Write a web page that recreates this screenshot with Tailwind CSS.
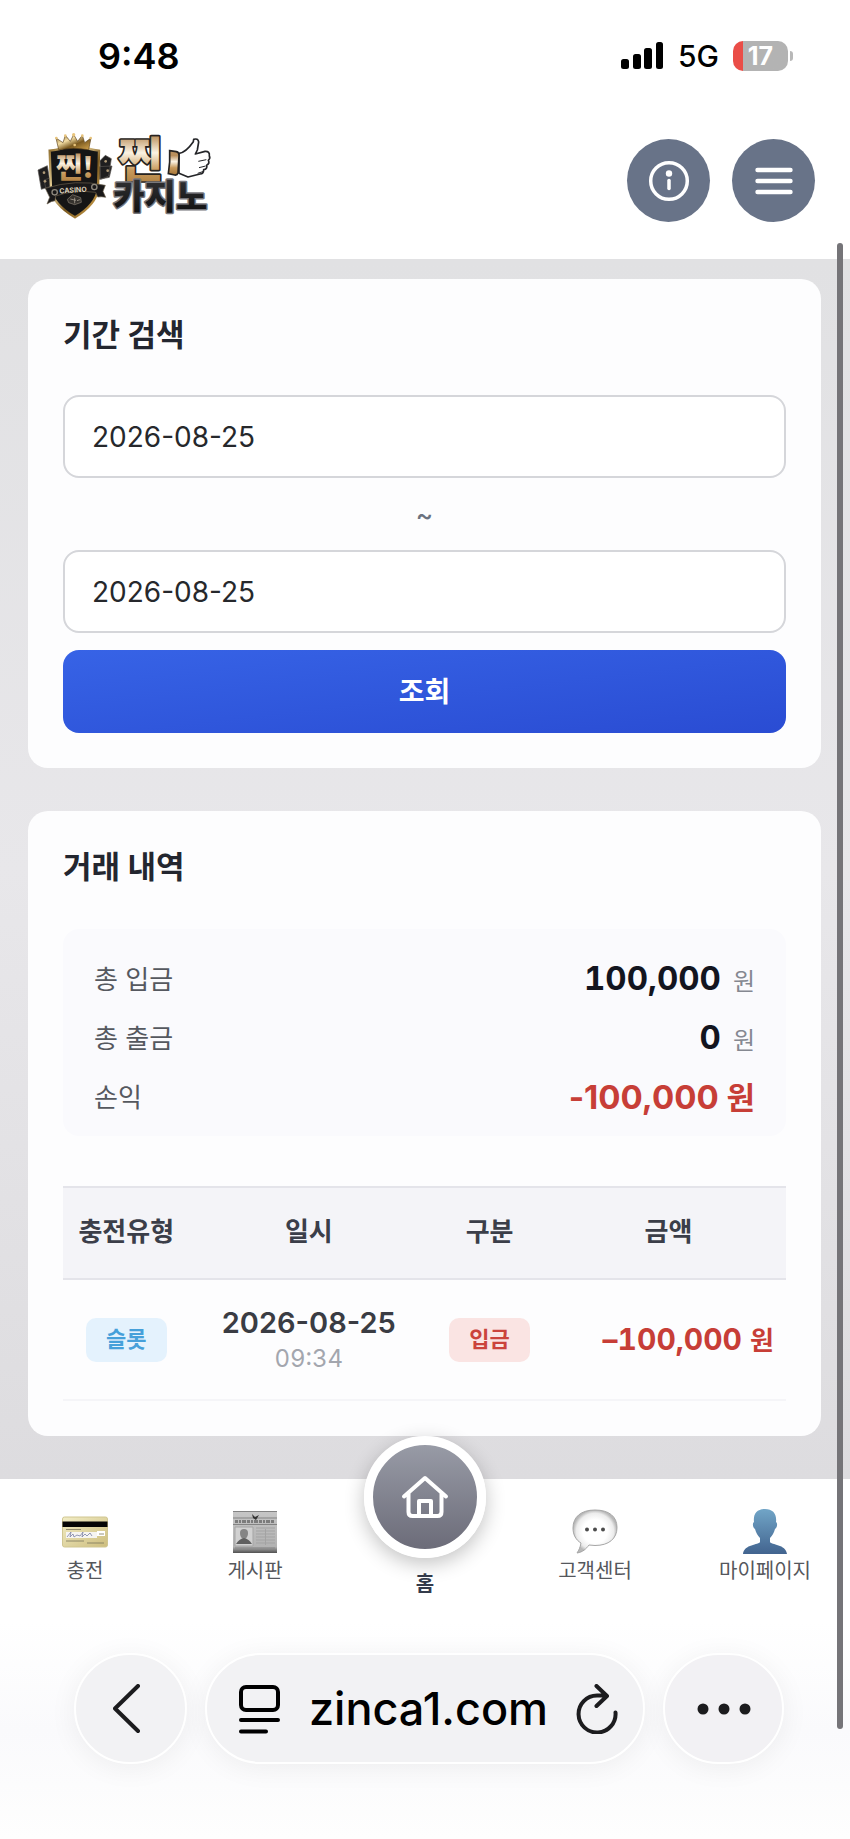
<!DOCTYPE html>
<html lang="ko">
<head>
<meta charset="utf-8">
<meta name="viewport" content="width=device-width, initial-scale=1">
<title>거래 내역</title>
<script src="https://cdn.jsdelivr.net/npm/@tailwindcss/browser@4"></script>
</head>
<body class="relative flex min-h-screen flex-col bg-white font-['Inter','Noto_Sans_CJK_KR',sans-serif] text-[#23262f]">

<!-- Status bar -->
<div class="flex h-28 items-center justify-between pr-[57px] pl-[98px] text-black">
  <span class="text-[36px] leading-none font-semibold">9:48</span>
  <div class="flex items-center gap-[14px]">
    <svg class="h-7 w-[43px]" viewBox="0 0 43 28" aria-hidden="true">
      <rect x="0" y="17" width="8" height="10" rx="2.500"/><rect x="12" y="12" width="8" height="15" rx="2.500"/><rect x="23" y="6" width="8" height="21" rx="2.500"/><rect x="35" y="0" width="7" height="27" rx="2.500"/>
    </svg>
    <span class="text-[30px] leading-none font-medium">5G</span>
    <div class="flex items-center gap-[2px]">
      <span class="flex h-[30px] w-[55px] items-center justify-center rounded-[10px] bg-linear-to-r from-[#ea4d47] from-[18%] to-[#b3b3b3] to-[18%] text-[25px] leading-none font-bold text-white">17</span>
      <span class="h-[10px] w-[3px] rounded-r-full bg-[#b8b8b8]"></span>
    </div>
  </div>
</div>

<!-- Site header -->
<header class="flex h-[147px] items-start justify-between pr-[35px] pl-5">
  <a href="#" aria-label="찐 카지노" class="mt-2 block">
    <svg class="h-[110px] w-[210px]" viewBox="0 0 630 330" aria-hidden="true">
      <defs>
        <linearGradient id="gold" x1="0" y1="0" x2="1" y2="1"><stop offset="0" stop-color="#8b6a2c"/><stop offset=".35" stop-color="#f3dda4"/><stop offset=".6" stop-color="#7b5a20"/><stop offset="1" stop-color="#d9a951"/></linearGradient>
        <linearGradient id="cream" x1="0" y1="0" x2="0" y2="1"><stop offset=".2" stop-color="#b98f5c"/><stop offset=".45" stop-color="#fbf3e3"/><stop offset=".7" stop-color="#c79a5c"/><stop offset="1" stop-color="#a37233"/></linearGradient>
        <linearGradient id="coal" x1="0" y1="0" x2="0" y2="1"><stop offset="0" stop-color="#39393b"/><stop offset="1" stop-color="#0b0b0c"/></linearGradient>
      </defs>
      <g fill="#1f1e1f" stroke="#57534e" stroke-width="2">
        <path d="M54 150l28-13 10 62-28 9zM72 180l24-8v32l-18 3zM240 122l16-16 18 10-8 52-24 10zM236 140l40-2-8 34-30 6z"/>
      </g>
      <g fill="#b09a77"><circle cx="72" cy="158" r="4"/><circle cx="75" cy="184" r="4"/><circle cx="257" cy="124" r="4"/><circle cx="263" cy="152" r="4"/></g>
      <path d="M89 92q38-4 51-14h50q14 10 47 14l-3 116q-6 45-69 84-66-40-72-84z" fill="#151515" stroke="url(#gold)" stroke-width="7"/>
      <path d="M116 89l-8-35 21 14 7-22 15 18 10-20 12 20 14-18 7 22 19-14-7 35q-45-9-90 0z" fill="url(#gold)" stroke="#5d431b" stroke-width="2"/>
      <g fill="#e8c47c"><circle cx="109" cy="54" r="4"/><circle cx="136" cy="47" r="4"/><circle cx="161" cy="44" r="5"/><circle cx="187" cy="47" r="4"/><circle cx="212" cy="54" r="4"/><circle cx="164" cy="75" r="4"/></g>
      <text x="108" y="174" font-family="Noto Sans CJK KR" font-weight="900" font-size="86" fill="url(#cream)">찐!</text>
      <path d="M76 205q90-29 180-9l-7 18 8 18q-12-3-24-1l-6-14q-63-9-120 11l-2 14q-11 1-24 10l8-20z" fill="#191819" stroke="#6d614d" stroke-width="2"/>
      <text x="118" y="217" font-family="Inter" font-weight="700" font-size="21" fill="#ded3bd" transform="rotate(-4 165 212)">CASINO</text>
      <g fill="none" stroke="#8e887d" stroke-width="4"><circle cx="104" cy="217" r="8"/><circle cx="223" cy="201" r="8"/></g>
      <path d="M142 238l16-14 24 9 2 14-20 7-18-6z" fill="#35322d" stroke="#8c8376" stroke-width="2"/><path d="M151 237l17 4m-4-8v17m7-8l9-3" stroke="#bbb2a5" stroke-width="2"/>
      <g font-family="Noto Sans CJK KR" font-weight="900" stroke-linejoin="round" paint-order="stroke">
        <text x="295" y="172" font-size="144" fill="url(#cream)" stroke="#252220" stroke-width="10">찐</text>
        <text x="280" y="267" font-size="102" fill="url(#coal)" stroke="#77777c" stroke-width="9">카지노</text>
      </g>
      <path d="M477 100q21-3 43-35l1-7q13-4 15 8l-4 24-6 12 29-8q15-1 13 14 4 7-3 13 5 9-5 15 3 11-9 13 0 12-11 13l-36 9-27-11z" fill="#fff" stroke="#242528" stroke-width="5" stroke-linejoin="round"/>
      <path d="M535 124l24-5m-22 24l20-5m-24 22l18-6" stroke="#242528" stroke-width="3" fill="none"/>
      <path d="M449 92l20 3q9 2 8 12l-3 52q-2 7-10 6l-19-4q6-35 4-69z" fill="url(#cream)" stroke="#242220" stroke-width="5"/>
    </svg>
  </a>
  <div class="mt-[27px] flex gap-[22px]">
    <button type="button" aria-label="정보" class="grid size-[83px] place-items-center rounded-full bg-[#687388]">
      <svg class="size-[42px]" viewBox="0 0 42 42" fill="none" stroke="#fff" stroke-width="3.500" stroke-linecap="round" aria-hidden="true"><circle cx="21" cy="21" r="18.300"/><path d="M21 20.500v8"/><circle cx="21" cy="13.500" r="3.200" fill="#fff" stroke="none"/></svg>
    </button>
    <button type="button" aria-label="메뉴" class="grid size-[83px] place-items-center rounded-full bg-[#687388]">
      <svg class="h-[28px] w-[38px]" viewBox="0 0 38 28" stroke="#fff" stroke-width="4.400" stroke-linecap="round" aria-hidden="true"><path d="M2.500 3h33M2.500 14h33M2.500 25h33"/></svg>
    </button>
  </div>
</header>

<!-- Content -->
<main class="flex flex-col gap-[43px] bg-linear-to-b from-[#e1e1e3] via-[#e8e7ea] to-[#dddcdf] pt-5 pr-[29px] pb-[43px] pl-7">
  <section class="rounded-[20px] bg-[#fdfdfe] px-[35px] pt-[34px] pb-[35px]">
    <h2 class="text-[31px] leading-[44px] font-bold">기간 검색</h2>
    <form class="mt-[38px] flex flex-col">
      <input type="text" aria-label="시작일" value="2026-08-25" class="h-[83px] w-full rounded-2xl border-2 border-[#d5d6da] bg-white px-[27px] text-[28px] text-[#26282c]">
      <span class="flex h-[72px] items-center justify-center text-[26px] font-medium text-[#6b7280]">~</span>
      <input type="text" aria-label="종료일" value="2026-08-25" class="h-[83px] w-full rounded-2xl border-2 border-[#d5d6da] bg-white px-[27px] text-[28px] text-[#26282c]">
      <button type="button" class="mt-[17px] h-[83px] rounded-2xl bg-linear-to-br from-[#3763e6] to-[#2a4cd3] text-[28px] font-bold text-white">조회</button>
    </form>
  </section>

  <section class="rounded-[20px] bg-[#fdfdfe] px-[35px] pt-[34px] pb-[35px]">
    <h2 class="text-[31px] leading-[44px] font-bold">거래 내역</h2>
    <dl class="mt-10 rounded-2xl bg-[#fafafd] px-[31px] pt-[21px] pb-[9px]">
      <div class="flex h-[59px] items-center justify-between">
        <dt class="text-[26px] text-[#55585f]">총 입금</dt>
        <dd class="flex items-baseline gap-3 text-[33px] leading-10 font-bold text-[#13151f] tabular-nums">100,000<span class="text-[24px] font-normal text-[#858891]">원</span></dd>
      </div>
      <div class="flex h-[59px] items-center justify-between">
        <dt class="text-[26px] text-[#55585f]">총 출금</dt>
        <dd class="flex items-baseline gap-3 text-[33px] leading-10 font-bold text-[#13151f] tabular-nums">0<span class="text-[24px] font-normal text-[#858891]">원</span></dd>
      </div>
      <div class="flex h-[59px] items-center justify-between">
        <dt class="text-[26px] text-[#55585f]">손익</dt>
        <dd class="text-[33px] leading-10 font-bold text-[#c73e37]">-100,000 <span class="text-[31px]">원</span></dd>
      </div>
    </dl>

    <table class="mt-[50px] w-full table-fixed border-collapse text-center">
      <colgroup><col class="w-[17.500%]"><col class="w-[33%]"><col class="w-[17%]"><col></colgroup>
      <thead>
        <tr class="h-[92px] border-t-2 border-b-2 border-[#e4e4ea] bg-[#f4f4f8] text-[26px] text-[#3b3e49]">
          <th scope="col" class="pb-[3px] font-bold">충전유형</th>
          <th scope="col" class="pb-[3px] font-bold">일시</th>
          <th scope="col" class="pb-[3px] font-bold">구분</th>
          <th scope="col" class="pb-[3px] font-bold">금액</th>
        </tr>
      </thead>
      <tbody>
        <tr class="h-[121px] border-b-2 border-[#f5f5f8]">
          <td><span class="inline-flex h-11 items-center rounded-[10px] bg-[#e4f2fd] px-5 text-[22px] font-bold text-[#46a0da]">슬롯</span></td>
          <td class="pt-[3px]">
            <div class="text-[29px] leading-9 font-semibold text-[#3a3c43]">2026-08-25</div>
            <div class="text-[24px] leading-9 text-[#a3a6ae] tabular-nums">09:34</div>
          </td>
          <td><span class="inline-flex h-11 items-center rounded-[10px] bg-[#fae4e3] px-5 text-[22px] font-bold text-[#cb433c]">입금</span></td>
          <td class="pr-3 text-right text-[30px] font-bold whitespace-nowrap text-[#c73e37] tabular-nums">–100,000 <span class="text-[26px]">원</span></td>
        </tr>
      </tbody>
    </table>
  </section>
</main>

<!-- Bottom navigation -->
<nav class="grid h-[142px] grid-cols-5 bg-white text-[20px] leading-7 text-[#55575c]">
  <a href="#" class="flex flex-col items-center gap-[2px] pt-7">
    <svg class="h-12 w-[46px]" viewBox="0 0 46 48" aria-hidden="true">
      <defs><linearGradient id="card" x1="0" y1="0" x2="1" y2="1"><stop offset="0" stop-color="#f2edc6"/><stop offset="1" stop-color="#cdbd7d"/></linearGradient></defs>
      <rect x=".5" y="10" width="45" height="30" rx="2" fill="url(#card)" stroke="#d0c691"/><path d="M.5 14.500h45v5.500H.5z" fill="#050505"/><path d="M4 25h31v6H4z" fill="#f6f5f2"/><path d="M35 24h8v5h-8z" fill="#fff"/><path d="M5 30l4-5-1 5 3-3 1 3 3-2 3 1 3-4-1 5 3-3 2 2 3-3 2 3" fill="none" stroke="#7b80a4" stroke-width=".8"/><path d="M37 27h5M4 34h18M25 36h17M4 22.500h15" stroke="#7c765c" stroke-width=".8"/>
    </svg>
    <span>충전</span>
  </a>
  <a href="#" class="flex flex-col items-center gap-[2px] pt-7">
    <svg class="h-12 w-[46px]" viewBox="0 0 46 48" aria-hidden="true">
      <defs><linearGradient id="paper" x1="0" y1="0" x2="0" y2="1"><stop offset="0" stop-color="#c6c6c6"/><stop offset=".85" stop-color="#b3b3b3"/><stop offset="1" stop-color="#515151"/></linearGradient></defs>
      <path d="M1 4h44v42H1z" fill="url(#paper)"/><path d="M1 4.500h44M1 11h44M1 17.500h44" stroke="#838383"/><path d="M3 14.500h40" stroke="#7c7c7c" stroke-width="3" stroke-dasharray="3 1 2 1 4 1"/><path d="M20 7l3 3 4-2-3 5-3-2z" fill="#333"/><path d="M3 20h18v19H3z" fill="#d1d1d1" stroke="#a5a5a5"/><path d="M12 22q4 0 4 4t-3 6h-2q-3-2-3-6t4-4z" fill="#858585"/><path d="M4 37q3-5 8-6 5 1 8 6z" fill="#606060"/><path d="M24 21h19M24 24h19M24 27h19M24 30h19M24 33h19M24 36h19M33.500 22v16" stroke="#a3a3a3"/><path d="M3 41h40" stroke="#888"/>
    </svg>
    <span>게시판</span>
  </a>
  <a href="#" class="relative flex flex-col items-center pt-[91px] font-bold text-[#343b4b]">
    <span class="absolute -top-[43px] left-1/2 grid size-[122px] -translate-x-1/2 place-items-center rounded-full border-[9px] border-white bg-linear-to-b from-[#989ba6] to-[#6c6c79] shadow-[0_6px_20px_rgba(0,0,0,0.24)]">
      <svg class="size-12" viewBox="0 0 48 48" fill="none" stroke="#fff" stroke-width="4" stroke-linecap="round" stroke-linejoin="round" aria-hidden="true"><path d="M3 23.500L24 5l21 18.500M7.500 20v19q0 4 4 4h25q4 0 4-4V20"/><path d="M18 42V28h12v14" stroke-linecap="butt"/></svg>
    </span>
    <span>홈</span>
  </a>
  <a href="#" class="flex flex-col items-center gap-[2px] pt-7">
    <svg class="h-12 w-[46px]" viewBox="0 0 46 48" aria-hidden="true">
      <defs><radialGradient id="bubble"><stop offset=".55" stop-color="#fff"/><stop offset=".85" stop-color="#ececec"/><stop offset="1" stop-color="#b8b8b8"/></radialGradient></defs>
      <path d="M23 3C9 3 1 10 1 21c0 7 3 12 8 15-1 5-2 7-4 10 6-1 9-4 12-8l6 .5c14 0 22-7 22-18S37 3 23 3z" fill="url(#bubble)" stroke="#a6a6a6"/><g fill="#4b4b4b"><circle cx="15" cy="22.500" r="2"/><circle cx="23" cy="22.500" r="2"/><circle cx="31" cy="22.500" r="2"/></g>
    </svg>
    <span>고객센터</span>
  </a>
  <a href="#" class="flex flex-col items-center gap-[2px] pt-7">
    <svg class="h-12 w-[46px]" viewBox="0 0 46 48" aria-hidden="true">
      <defs><linearGradient id="person" x1="0" y1="0" x2="0" y2="1"><stop offset="0" stop-color="#71a5c7"/><stop offset="1" stop-color="#42648f"/></linearGradient></defs>
      <path d="M23 2c-8 0-12 5-11 13-2 1-1 6 1 7 1 4 3 7 5 9v4c-1 3-16 2-17 12h44c-1-10-16-9-17-12v-4c2-2 4-5 5-9 2-1 3-6 1-7 1-8-3-13-11-13z" fill="url(#person)"/>
    </svg>
    <span>마이페이지</span>
  </a>
</nav>

<!-- Browser toolbar -->
<footer class="flex grow items-start gap-[18px] bg-linear-to-b from-white via-[#fafafc] to-[#fefefe] pt-8 pr-[66px] pl-[74px] text-black">
  <button type="button" aria-label="뒤로" class="grid h-[111px] w-[113px] shrink-0 place-items-center rounded-full border-2 border-white bg-[#f2f2f4] pr-2 shadow-[0_4px_28px_rgba(0,0,0,0.06)]">
    <svg class="h-[50px] w-7" viewBox="0 0 28 50" fill="none" stroke="#1c1c1e" stroke-width="4" stroke-linecap="round" stroke-linejoin="round" aria-hidden="true"><path d="M25 2L2 24.500 25 47"/></svg>
  </button>
  <div class="flex h-[111px] min-w-0 grow items-center justify-between rounded-full border-2 border-white bg-[#f2f2f4] pr-[25px] pl-8 shadow-[0_4px_28px_rgba(0,0,0,0.06)]">
    <svg class="h-[50px] w-[42px] shrink-0" viewBox="0 0 42 50" fill="none" stroke="#000" stroke-width="4" stroke-linecap="round" aria-hidden="true"><rect x="2" y="3" width="37" height="23" rx="5"/><path d="M2 36h37M2 47.500h25"/></svg>
    <a href="#" class="text-[45px] leading-none font-medium">zinca1.com</a>
    <button type="button" aria-label="새로고침" class="shrink-0">
      <svg class="h-[50px] w-[42px]" viewBox="0 0 42 50" fill="none" stroke="#1c1c1e" stroke-width="4" stroke-linecap="round" stroke-linejoin="round" aria-hidden="true"><path d="M39.500 28.500A18.500 18.500 0 1 1 21 11.500h9M20.500 2L31 12 20.500 22"/></svg>
    </button>
  </div>
  <button type="button" aria-label="더 보기" class="grid h-[111px] w-[121px] shrink-0 place-items-center rounded-full border-2 border-white bg-[#f2f1f4] shadow-[0_4px_28px_rgba(0,0,0,0.06)]">
    <svg class="h-3 w-[54px]" viewBox="0 0 54 12" fill="#1c1c1e" aria-hidden="true"><circle cx="6" cy="6" r="5.500"/><circle cx="27" cy="6" r="5.500"/><circle cx="48" cy="6" r="5.500"/></svg>
  </button>
</footer>

<!-- Overlay scroll indicator -->
<div class="absolute top-[243px] right-[7px] bottom-[110px] w-[6px] rounded-full bg-[#757478]"></div>
</body>
</html>
